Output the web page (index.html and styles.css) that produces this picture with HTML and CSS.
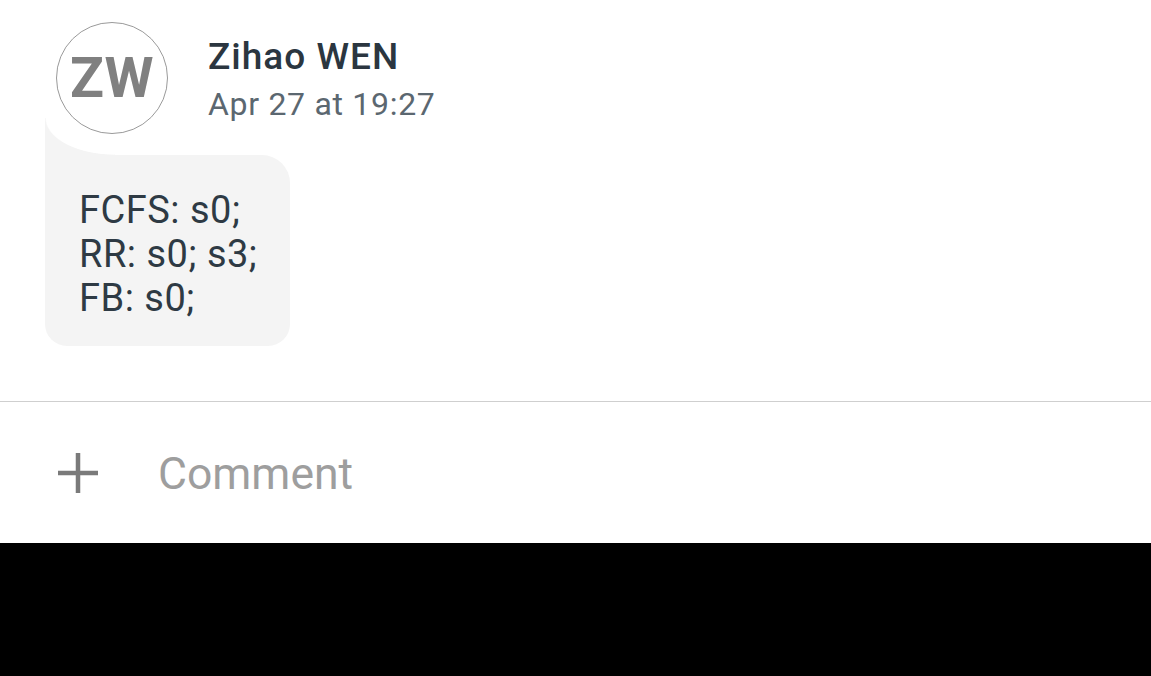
FILE: index.html
```html
<!DOCTYPE html>
<html>
<head>
<meta charset="utf-8">
<link rel="stylesheet" href="styles.css">
</head>
<body>
<div class="screen">
  <div class="post">
    <div class="header">
      <div class="avatar">ZW</div>
      <div class="meta">
        <div class="name">Zihao WEN</div>
        <div class="date">Apr 27 at 19:27</div>
      </div>
    </div>
    <div class="bubble">
      <div class="line">FCFS: s0;</div>
      <div class="line">RR: s0; s3;</div>
      <div class="line">FB: s0;</div>
    </div>
  </div>
  <div class="composer">
    <svg class="plus" width="40" height="40" viewBox="0 0 40 40"><path d="M20 0V40M0 20H40" stroke="#7a7a7a" stroke-width="4.5" fill="none"/></svg>
    <div class="placeholder">Comment</div>
  </div>
</div>
<div class="navbar"></div>
</body>
</html>
```

FILE: styles.css
```css
html, body {
  margin: 0;
  padding: 0;
  background: #000;
}
body {
  font-family: Roboto, "Noto Sans", sans-serif;
  width: 1151px;
  height: 676px;
  overflow: hidden;
}
.screen {
  background: #fff;
  height: 543px;
  display: flex;
  flex-direction: column;
}
.post {
  padding: 22px 45px 0;
  height: 402px;
  box-sizing: border-box;
  border-bottom: 1px solid #cfcfcf;
  flex: none;
}
.header {
  display: flex;
  align-items: flex-start;
  padding-left: 11px;
  gap: 40px;
}
.avatar {
  width: 110px;
  height: 110px;
  border: 1px solid #9a9a9a;
  border-radius: 50%;
  display: flex;
  align-items: center;
  justify-content: center;
  font-weight: 700;
  font-size: 56px;
  letter-spacing: 0.5px;
  color: #808080;
  background: #fff;
  flex: none;
}
.meta {
  padding-top: 14px;
}
.name {
  font-weight: 500;
  font-size: 37px;
  line-height: 42px;
  letter-spacing: 1px;
  color: #2b3640;
}
.date {
  font-size: 32px;
  line-height: 42px;
  letter-spacing: 0.7px;
  color: #5b6770;
  margin-top: 5px;
}
.bubble {
  position: relative;
  margin-top: 21px;
  width: 245px;
  box-sizing: border-box;
  background: #f4f4f4;
  border-radius: 0 28px 22px 22px;
  padding: 33px 10px 26px 34px;
  color: #2e3a44;
  font-size: 38px;
  line-height: 44px;
  letter-spacing: 0.5px;
}
.bubble::before {
  content: "";
  position: absolute;
  left: 0;
  top: -37px;
  width: 70px;
  height: 38px;
  background: radial-gradient(ellipse 70px 37px at 100% 0, transparent 98%, #f4f4f4 100%);
}
.composer {
  flex: 1;
  display: flex;
  align-items: center;
  padding-left: 58px;
  gap: 60px;
}
.plus {
  flex: none;
}
.placeholder {
  font-size: 44.5px;
  color: #9e9e9e;
  margin-top: 3px;
}
.navbar {
  height: 133px;
  background: #000;
}
```
